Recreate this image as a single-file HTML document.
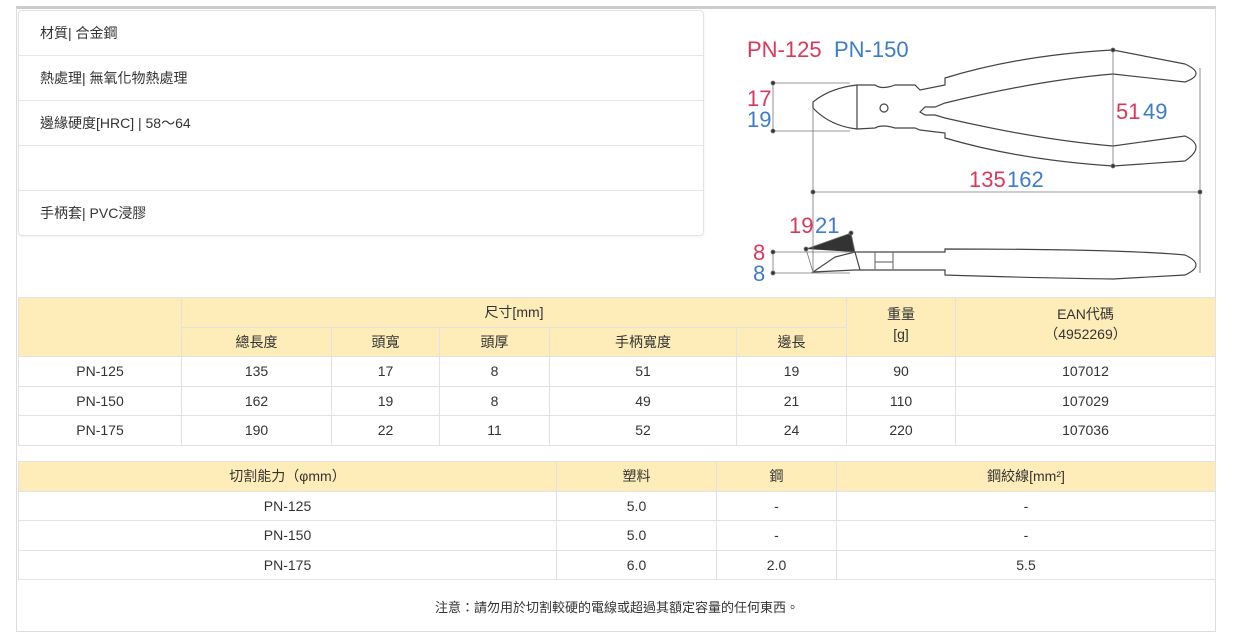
<!DOCTYPE html>
<html><head><meta charset="utf-8"><style>
body{margin:0;width:1233px;height:644px;background:#fff;position:relative;overflow:hidden;font-family:"Liberation Sans","Noto Sans CJK TC",sans-serif;font-size:14px;color:#333}
.a{position:absolute}
.frame{left:16px;top:6px;width:1200px;height:626px;border:1px solid #ddd;border-top:3px solid #ccc;box-sizing:border-box}
.list{left:18px;top:10px;width:686px;height:226px;border:1px solid #e3e3e3;border-radius:4px;box-sizing:border-box;box-shadow:0 1px 2px rgba(0,0,0,.06)}
.list div{height:45px;border-bottom:1px solid #e6e6e6;box-sizing:border-box;padding:13px 0 0 21px;line-height:18px}
.list div:last-child{border-bottom:none}
table{position:absolute;border-collapse:collapse;font-size:14px;color:#333}
td{border:1px solid #e2e2e2;text-align:center;padding:0;height:28.5px;line-height:16px}
.h td{background:#feedb9}
</style></head><body>
<div class="a frame"></div>
<div class="a list">
<div>材質| 合金鋼</div><div>熱處理| 無氧化物熱處理</div><div>邊緣硬度[HRC] | 58～64</div><div></div><div>手柄套| PVC浸膠</div>
</div>
<svg class="a" style="left:720px;top:20px" width="500" height="275" viewBox="0 0 500 275">
<g font-family="Liberation Sans,sans-serif" font-size="22">
<text x="27" y="37" fill="#d9385a">PN-125</text><text x="114" y="37" fill="#3d7cc9">PN-150</text>
<text x="27" y="86" fill="#d9385a">17</text><text x="27" y="107" fill="#3d7cc9">19</text>
<text x="396" y="99" fill="#d9385a">51</text><text x="423" y="99" fill="#3d7cc9">49</text>
<text x="249" y="167" fill="#d9385a">135</text><text x="287" y="167" fill="#3d7cc9">162</text>
<text x="69" y="213" fill="#d9385a">19</text><text x="95" y="213" fill="#3d7cc9">21</text>
<text x="33" y="240" fill="#d9385a">8</text><text x="33" y="261" fill="#3d7cc9">8</text>
</g>
<g fill="none" stroke="#444" stroke-width="1.2">
<path d="M93 82 Q110 68 137 65 L137 109 Q110 106 93 88 Z"/>
<path d="M137 65 L155 65 Q162 70 175 65 L195 65 L200 70 L225 65 L225 58 Q300 35 393 30 L465 44 Q487 54 465 62 L393 54 Q320 60 225 83 L215 87 L205 87 L200 92 L205 95 L215 95 L225 98 Q320 120 393 126 L465 116 Q487 126 465 141 L393 146 Q300 140 225 118 L225 113 L200 110 L195 108 L175 108 Q162 104 155 108 L137 109"/>
<circle cx="164" cy="88" r="4"/>
<path d="M135 232 L115 237 L93 252 L135 250 L225 250 L225 255 Q320 258 393 259 L465 255 Q487 245 465 235 Q400 229 225 229 L225 232 Z M135 232 L140 250"/>
<path d="M155 232 L155 250 M173 232 L173 250 M155 242 L173 242" stroke="#777"/>
</g>
<g stroke="#777" stroke-width="0.8" fill="#333">
<path d="M53 63 L130 63 M53 111 L130 111 M53 63 L53 111 M93 88 L93 253 M93 172 L480 172 M480 48 L480 253 M393 30 L393 146 M53 232 L135 232 M53 253 L130 253 M53 232 L53 253 M86 229 L131 213 L135 232 M86 229 L93 252"/>
<circle cx="53" cy="63" r="2"/><circle cx="53" cy="111" r="2"/><circle cx="93" cy="172" r="2"/><circle cx="480" cy="172" r="2"/><circle cx="393" cy="30" r="2"/><circle cx="393" cy="146" r="2"/><circle cx="53" cy="232" r="2"/><circle cx="53" cy="253" r="2"/><circle cx="86" cy="229" r="2"/><circle cx="131" cy="213" r="2"/>
</g>
</svg>
<table style="left:18px;top:297px;width:1198px">
<tr class="h"><td rowspan="2" style="width:162px"></td><td colspan="5">尺寸[mm]</td><td rowspan="2" style="width:108px;vertical-align:top;padding-top:6px;line-height:20px">重量<br>[g]</td><td rowspan="2" style="vertical-align:top;padding-top:6px;line-height:20px">EAN代碼<br>（4952269）</td></tr>
<tr class="h"><td style="width:149px">總長度</td><td style="width:107px">頭寬</td><td style="width:109px">頭厚</td><td style="width:186px">手柄寬度</td><td style="width:109px">邊長</td></tr>
<tr><td>PN-125</td><td>135</td><td>17</td><td>8</td><td>51</td><td>19</td><td>90</td><td>107012</td></tr>
<tr><td>PN-150</td><td>162</td><td>19</td><td>8</td><td>49</td><td>21</td><td>110</td><td>107029</td></tr>
<tr><td>PN-175</td><td>190</td><td>22</td><td>11</td><td>52</td><td>24</td><td>220</td><td>107036</td></tr>
</table>
<table style="left:18px;top:461px;width:1198px">
<tr class="h"><td style="width:537px">切割能力（φmm）</td><td style="width:159px">塑料</td><td style="width:119px">鋼</td><td>鋼絞線[mm²]</td></tr>
<tr><td>PN-125</td><td>5.0</td><td>-</td><td>-</td></tr>
<tr><td>PN-150</td><td>5.0</td><td>-</td><td>-</td></tr>
<tr><td>PN-175</td><td>6.0</td><td>2.0</td><td>5.5</td></tr>
</table>
<div class="a" style="left:18px;top:597px;width:1198px;text-align:center;font-size:13px">注意：請勿用於切割較硬的電線或超過其額定容量的任何東西。</div>
</body></html>
